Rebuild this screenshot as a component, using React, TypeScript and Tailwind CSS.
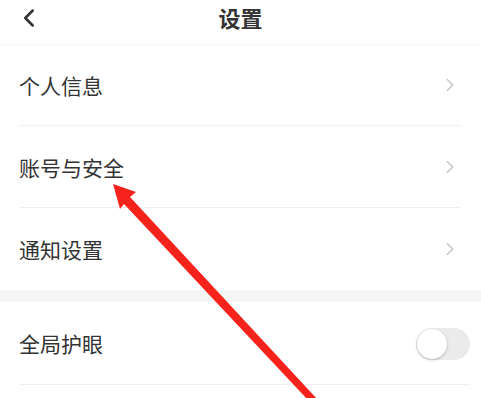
import { ChevronLeft, ChevronRight } from "lucide-react"

const ROWS = ["个人信息", "账号与安全", "通知设置"]

const font = "font-['Noto_Sans_CJK_SC','Noto_Sans',sans-serif]"

function Row({ label, last }: { label: string; last?: boolean }) {
  return (
    <div className="relative flex h-[82px] items-center justify-between pl-[19px] pr-[20px]">
      <span className="text-[21px] leading-none text-[#333]">{label}</span>
      <ChevronRight className="size-[22px] text-[#c4c4c4]" strokeWidth={1.5} />
      {!last && <div className="absolute bottom-0 left-[19px] right-[20px] h-px bg-[#f0f0f0]" />}
    </div>
  )
}

export default function App() {
  return (
    <div className={`relative h-[398px] w-[481px] overflow-hidden bg-white ${font}`}>
      <header className="relative flex h-[44px] justify-center pt-[6px] shadow-[0_1px_2px_rgba(0,0,0,0.04)]">
        <ChevronLeft className="absolute left-[14px] top-[3px] size-[30px] text-[#333]" strokeWidth={2} />
        <h1 className="text-[22px] font-bold leading-[22px] text-[#333]">设置</h1>
      </header>

      {ROWS.map((label, i) => (
        <Row key={label} label={label} last={i === ROWS.length - 1} />
      ))}

      <div className="h-[12px] bg-[#f5f5f5]" />

      <div className="relative flex h-[83px] items-center justify-between pl-[19px] pr-[11px]">
        <span className="text-[21px] leading-none text-[#333]">全局护眼</span>
        <div className="flex h-[32px] w-[54px] items-center rounded-full bg-[#ebebeb] p-px">
          <div className="size-[30px] rounded-full bg-white shadow-[0_1px_3px_rgba(0,0,0,0.25)]" />
        </div>
        <div className="absolute bottom-0 left-[19px] right-[11px] h-px bg-[#f0f0f0]" />
      </div>

      {/* annotation arrow */}
      <svg className="pointer-events-none absolute left-0 top-0" width="481" height="398" viewBox="0 0 481 398">
        <polygon points="113,184 136,192 130,197 318,400 308,400 124,204 120,209" fill="#f5231b" />
      </svg>
    </div>
  )
}
